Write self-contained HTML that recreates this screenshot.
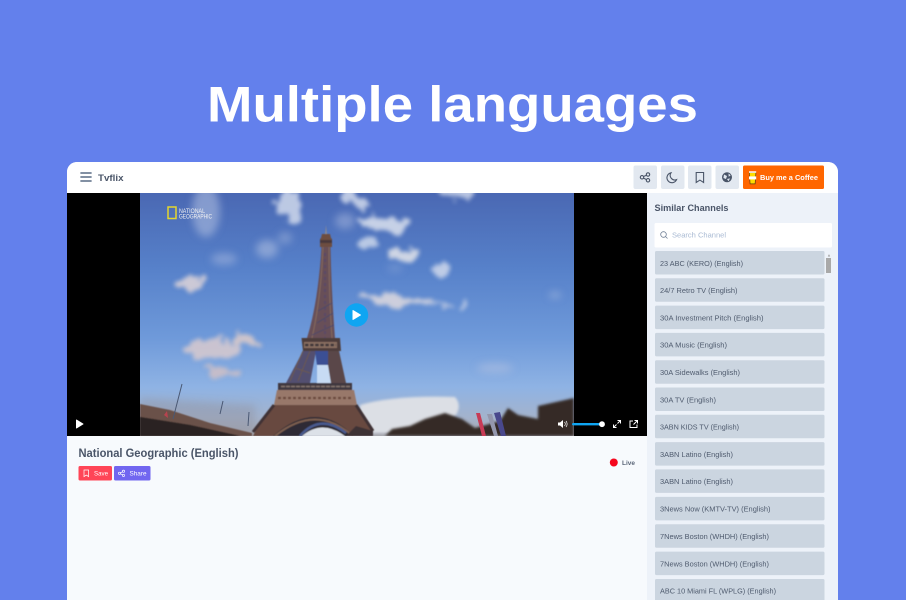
<!DOCTYPE html>
<html><head><meta charset="utf-8"><title>Tvflix</title>
<style>
html,body{margin:0;padding:0;width:906px;height:600px;overflow:hidden;background:#6380ec}
svg{display:block;filter:blur(.3px)}
text{font-family:"Liberation Sans",sans-serif}
</style></head>
<body>
<svg width="906" height="600" viewBox="0 0 906 600" xmlns="http://www.w3.org/2000/svg">
<defs>
<linearGradient id="sky" x1="0" y1="0" x2="0" y2="1">
<stop offset="0" stop-color="#4a68b3"/><stop offset=".3" stop-color="#5680c9"/><stop offset=".6" stop-color="#6f9ada"/><stop offset=".8" stop-color="#8fb3e4"/><stop offset=".92" stop-color="#a3b3cd"/><stop offset="1" stop-color="#a9a9b0"/>
</linearGradient>
<filter id="b1" x="-40%" y="-40%" width="180%" height="180%"><feGaussianBlur stdDeviation="1.3"/></filter>
<filter id="cl" x="-5%" y="-5%" width="110%" height="110%">
<feTurbulence type="fractalNoise" baseFrequency=".055" numOctaves="3" seed="7" result="n"/>
<feDisplacementMap in="SourceGraphic" in2="n" scale="22" xChannelSelector="R" yChannelSelector="G"/>
<feGaussianBlur stdDeviation="2.1"/>
</filter>
<filter id="b2" x="-40%" y="-40%" width="180%" height="180%"><feGaussianBlur stdDeviation="4"/></filter>
<filter id="b0" x="-10%" y="-10%" width="120%" height="120%"><feGaussianBlur stdDeviation=".4"/></filter>
<clipPath id="card"><path d="M67 600V172a10 10 0 0 1 10-10H828a10 10 0 0 1 10 10V600Z"/></clipPath>
<clipPath id="vid"><rect x="0" y="0" width="434" height="243"/></clipPath>
</defs>

<rect width="906" height="600" fill="#6380ec"/>
<text x="207" y="121.5" font-size="50" font-weight="700" fill="#fff" textLength="491" lengthAdjust="spacingAndGlyphs">Multiple languages</text>

<g clip-path="url(#card)">
<rect x="67" y="162" width="771" height="438" fill="#f7fafd"/>
<rect x="647" y="193" width="191" height="407" fill="#edf2f9"/>
<rect x="67" y="162" width="771" height="31" fill="#fff"/>

<!-- header -->
<g stroke="#718096" stroke-width="1.7" stroke-linecap="round"><path d="M81 173H91M81 177H91M81 181H91"/></g>
<text x="98" y="181" font-size="9.5" font-weight="700" fill="#4a5568" textLength="25.5" lengthAdjust="spacingAndGlyphs">Tvflix</text>

<g fill="#e2e8f0">
<rect x="633.5" y="165.5" width="23.5" height="23.5" rx="2"/>
<rect x="661" y="165.5" width="23.5" height="23.5" rx="2"/>
<rect x="688" y="165.5" width="23.5" height="23.5" rx="2"/>
<rect x="715.5" y="165.5" width="23.5" height="23.5" rx="2"/>
</g>
<rect x="743" y="165.5" width="81" height="23.5" rx="1.5" fill="#ff6600"/>
<g fill="none" stroke="#4a5568" stroke-width="1.1">
<circle cx="642" cy="177.3" r="1.7"/><circle cx="648" cy="174.5" r="1.7"/><circle cx="648" cy="180.3" r="1.7"/><path d="M643.5 176.5L646.5 175.2M643.5 178.1L646.5 179.6"/>
<path d="M671 172.8a5 5 0 1 0 5.6 6.8a4.6 4.6 0 0 1-5.6-6.8Z"/>
<path d="M696.2 172.5h7.4v10l-3.7-2.4l-3.7 2.4Z"/>
</g>
<circle cx="727" cy="177.3" r="5" fill="#4a5568"/>
<path d="M724 174.5l3 1.5l-1 3l-2.6-1ZM728.5 173.5l2.2 1.8l-2 1.5ZM727 179l3-.6l-1.5 2.9Z" fill="#e2e8f0"/>
<!-- coffee -->
<path d="M749.3 172.5h6.6l-.8 11.4h-5Z" fill="#ffdd00" stroke="#5b3a12" stroke-width=".7"/>
<rect x="749" y="176.4" width="7.2" height="3" fill="#fff"/>
<rect x="749" y="171.3" width="7.2" height="1.5" fill="#fff"/>
<text x="760" y="180" font-size="7.4" font-weight="700" fill="#fff" textLength="58" lengthAdjust="spacingAndGlyphs">Buy me a Coffee</text>

<!-- player -->
<rect x="67" y="193" width="580" height="243" fill="#000"/>
<g transform="translate(140 193)" clip-path="url(#vid)">
<rect width="434" height="243" fill="url(#sky)"/>
<!-- faint clouds -->
<g filter="url(#b2)" fill="#b4c2e2">
<ellipse cx="66" cy="18" rx="14" ry="26" opacity=".55"/>
<ellipse cx="84" cy="66" rx="13" ry="6" opacity=".45"/>
<ellipse cx="127" cy="56" rx="11" ry="9" opacity=".55"/>
<ellipse cx="145" cy="45" rx="7" ry="6" opacity=".4"/>
<ellipse cx="205" cy="28" rx="10" ry="8" opacity=".45"/>
<ellipse cx="355" cy="175" rx="18" ry="5" opacity=".5"/>
<ellipse cx="415" cy="102" rx="6" ry="3" opacity=".55"/>
<ellipse cx="255" cy="75" rx="8" ry="4" opacity=".25"/>
</g>
<!-- soft cloud bodies -->
<g filter="url(#cl)" opacity=".88">
<ellipse cx="151" cy="13" rx="11" ry="20" fill="#ccd6ea" transform="rotate(-12 151 13)"/>
<ellipse cx="216" cy="8" rx="13" ry="6" fill="#cdd7ea" transform="rotate(25 216 8)"/>
<ellipse cx="244" cy="30" rx="24" ry="9" fill="#d7deec" transform="rotate(8 244 30)"/>
<ellipse cx="228" cy="50" rx="9" ry="6" fill="#c8d4e9"/>
<ellipse cx="264" cy="61" rx="14" ry="8" fill="#e0e2e8"/>
<ellipse cx="302" cy="75" rx="8" ry="7" fill="#ccd6ea"/>
<ellipse cx="319" cy="-1" rx="19" ry="7" fill="#c9d3e8"/>
<ellipse cx="49" cy="91" rx="15" ry="5" fill="#dcd3d8"/>
<ellipse cx="259" cy="107" rx="36" ry="5" fill="#dcd8de"/>
<ellipse cx="291" cy="112" rx="17" ry="2" fill="#c5cee3"/>
<ellipse cx="322" cy="110" rx="5" ry="2.5" fill="#c8d2e8"/>
<ellipse cx="74" cy="156" rx="33" ry="10" fill="#d6c9cf"/>
<ellipse cx="109" cy="146" rx="15" ry="5" fill="#dccbc9"/>
<ellipse cx="79" cy="180" rx="21" ry="4" fill="#cdbfc6"/>
</g>
<!-- low cloud bank -->
<g filter="url(#b1)">
<path d="M220 212Q255 202 315 204Q322 212 316 222L290 240H232L220 222Z" fill="#dcdfe5"/>
</g>
<path d="M0 205L115 212V243H0Z" fill="#8e8f9b" opacity=".4" filter="url(#b2)"/>
<!-- tower -->
<g filter="url(#b0)">
<path d="M186 32l.9 9h-1.8Z" fill="#8e8b91"/>
<path d="M182 41h8l1 4l1 1v8h-12v-8l1-1Z" fill="#6d4d40"/>
<path d="M180 47h12v3h-12Z" fill="#48373a"/>
<path d="M181.5 54H190.5Q191.5 100 195 145H167Q178 110 181.5 54Z" fill="#685058"/>
<path d="M183 54Q181 105 172 145M189 54Q189 105 192 145" stroke="#866a5d" stroke-width="1" fill="none"/>
<path d="M185 60V145" stroke="#5a4a66" stroke-width="2" stroke-dasharray="3 3"/>
<path d="M177 130L193 120M172 142L194 132M178 118L192 110" stroke="#4b4a6b" stroke-width=".9" fill="none"/>
<path d="M161.5 145H200L201 158H163Z" fill="#4e3d3b"/>
<path d="M164 149h33v6h-33Z" fill="#8a7062"/>
<path d="M165 152h31" stroke="#3e3438" stroke-width="2.4" stroke-dasharray="3.5 1.6"/>
<path d="M163 158H176L170 190H146Z" fill="#53506f"/>
<path d="M163 158L150 188M170 158L158 188M155 175L170 180" stroke="#6c5850" stroke-width="1" fill="none"/>
<path d="M186 158H199L206 190H190Z" fill="#5a4748"/>
<path d="M175 158H188V172H177Z" fill="#3b5094"/>
<path d="M177 172H188L191 190H177Z" fill="#c7dbf4"/>
<path d="M138 190H212V197H138Z" fill="#40373f"/>
<path d="M141 193.5H210" stroke="#877871" stroke-width="1.6" stroke-dasharray="4 1"/>
<path d="M137 197H214L217 212H134Z" fill="#98786a"/>
<path d="M134 212H217L233 237L231 243H113L116 237Z" fill="#67493f"/>
<path d="M138 205H212" stroke="#6b493e" stroke-width="2.2" stroke-dasharray="3 2"/>
<path d="M134 212L113 239M216 212L233 238" stroke="#3f3234" stroke-width="3"/>
<path d="M133 243Q176 205 214 243Z" fill="#2f2b35"/>
<path d="M162 243Q182 226 205 243Z" fill="#dce1e8"/>
<path d="M135 243Q176 210 213 243" fill="none" stroke="#7d5f50" stroke-width="2"/>
<path d="M160 243Q180 220 206 240" fill="none" stroke="#485a8e" stroke-width="2.6"/>
<path d="M206 243L216 233L233 238V243Z" fill="#3e3234"/>
</g>
<!-- foreground -->
<path d="M0 211L30 217L70 230L112 240V243H0Z" fill="#6b5149" filter="url(#b0)"/>
<path d="M0 224L50 232L100 243H0Z" fill="#2a2220" filter="url(#b0)"/>
<path d="M33 226L42 191M80 221L83 208M108 233L109 219" stroke="#4a5873" stroke-width="1"/>
<path d="M24 222l3-4l1 7Z" fill="#b8434f"/>
<path d="M245 243L252 236L270 233L285 226L305 220L322 226L335 235L360 228L368 215L378 222L398 226L398 213L434 205V243Z" fill="#342a26" filter="url(#b1)"/>
<path d="M336 220L340 220L346 243H342Z" fill="#c73a55"/>
<path d="M347 221L352 221L358 243H354Z" fill="#9497ad"/>
<path d="M354 220L360 219L366 243H361Z" fill="#49488c"/>
<!-- logo -->
<rect x="28" y="14" width="8" height="11.5" fill="none" stroke="#e4d62e" stroke-width="1.5"/>
<text x="39" y="20" font-size="6" fill="#f2f2f2" textLength="26" lengthAdjust="spacingAndGlyphs">NATIONAL</text>
<text x="39" y="25.5" font-size="6" fill="#f2f2f2" textLength="33" lengthAdjust="spacingAndGlyphs">GEOGRAPHIC</text>
</g>

<circle cx="356.5" cy="315" r="11.7" fill="#0fa5f2"/>
<path d="M353 310.5V319.5L360.5 315Z" fill="#fff" stroke="#fff" stroke-linejoin="round"/>
<path d="M76.5 420V428L83 424Z" fill="#fff" stroke="#fff" stroke-linejoin="round"/>
<path d="M558 422.5h2l3-2.5v8l-3-2.5h-2Z" fill="#fff"/>
<path d="M564.5 422a3 3 0 0 1 0 4M566 421a4.5 4.5 0 0 1 0 6" stroke="#fff" stroke-width=".7" fill="none"/>
<rect x="572" y="423" width="30" height="2.4" rx="1.2" fill="#0fa5f2"/>
<circle cx="602" cy="424.2" r="2.9" fill="#fff"/>
<g fill="none" stroke="#fff" stroke-width="1">
<path d="M613.5 424.5v3h3M613.5 427.5l3-3M620.5 423.5v-3h-3M620.5 420.5l-3 3"/>
<path d="M633 421h-3v6.5h7v-3M633.5 424.5l4-4M634.5 420.5h3v3"/>
</g>

<!-- info -->
<text x="78.5" y="457" font-size="11.5" font-weight="700" fill="#4a5568" textLength="160" lengthAdjust="spacingAndGlyphs">National Geographic (English)</text>
<rect x="78.5" y="466" width="33.5" height="14.5" rx="1.5" fill="#ff4557"/>
<rect x="114" y="466" width="36.5" height="14.5" rx="1.5" fill="#7166f0"/>
<path d="M84 470h4.6v6.6l-2.3-1.5l-2.3 1.5Z" fill="none" stroke="#fff" stroke-width=".7"/>
<text x="94" y="475.5" font-size="6" fill="#fff" textLength="14" lengthAdjust="spacingAndGlyphs">Save</text>
<g fill="none" stroke="#fff" stroke-width=".7"><circle cx="119.5" cy="473.3" r="1.1"/><circle cx="123.5" cy="471.2" r="1.1"/><circle cx="123.5" cy="475.4" r="1.1"/><path d="M120.5 472.8l2-1M120.5 473.8l2 1"/></g>
<text x="129.5" y="475.5" font-size="6" fill="#fff" textLength="17" lengthAdjust="spacingAndGlyphs">Share</text>
<circle cx="613.8" cy="462.5" r="4" fill="#f5061d"/>
<text x="622" y="465" font-size="6.6" font-weight="700" fill="#5b6678" textLength="13" lengthAdjust="spacingAndGlyphs">Live</text>

<!-- sidebar -->
<text x="654.5" y="211" font-size="9" font-weight="700" fill="#4a5568" textLength="74" lengthAdjust="spacingAndGlyphs">Similar Channels</text>
<rect x="654.5" y="223" width="177.5" height="24.5" rx="1.5" fill="#fff"/>
<circle cx="663.5" cy="234.5" r="2.8" fill="none" stroke="#718096" stroke-width=".8"/>
<path d="M665.6 236.6L667.5 238.5" stroke="#718096" stroke-width=".8"/>
<text x="672" y="237.5" font-size="7" fill="#a9bad3" textLength="54" lengthAdjust="spacingAndGlyphs">Search Channel</text>
<text x="829" y="256.5" font-size="4" text-anchor="middle" fill="#a0a0a0">▲</text>
<rect x="826" y="258" width="5" height="15" fill="#a9a9a9"/>

<g fill="#cbd5e0">
<rect x="655" y="251" width="169.5" height="23.5" rx="1.5"/>
<rect x="655" y="278.3" width="169.5" height="23.5" rx="1.5"/>
<rect x="655" y="305.6" width="169.5" height="23.5" rx="1.5"/>
<rect x="655" y="332.9" width="169.5" height="23.5" rx="1.5"/>
<rect x="655" y="360.2" width="169.5" height="23.5" rx="1.5"/>
<rect x="655" y="387.5" width="169.5" height="23.5" rx="1.5"/>
<rect x="655" y="414.8" width="169.5" height="23.5" rx="1.5"/>
<rect x="655" y="442.1" width="169.5" height="23.5" rx="1.5"/>
<rect x="655" y="469.4" width="169.5" height="23.5" rx="1.5"/>
<rect x="655" y="496.9" width="169.5" height="23.5" rx="1.5"/>
<rect x="655" y="524.3" width="169.5" height="23.5" rx="1.5"/>
<rect x="655" y="551.6" width="169.5" height="23.5" rx="1.5"/>
<rect x="655" y="579" width="169.5" height="23.5" rx="1.5"/>
</g>
<g font-size="7.4" fill="#4f5b6e">
<text x="660" y="265.8" textLength="83" lengthAdjust="spacingAndGlyphs">23 ABC (KERO) (English)</text>
<text x="660" y="293" textLength="77.5" lengthAdjust="spacingAndGlyphs">24/7 Retro TV (English)</text>
<text x="660" y="320.4" textLength="103.5" lengthAdjust="spacingAndGlyphs">30A Investment Pitch (English)</text>
<text x="660" y="347.7" textLength="67" lengthAdjust="spacingAndGlyphs">30A Music (English)</text>
<text x="660" y="375" textLength="80" lengthAdjust="spacingAndGlyphs">30A Sidewalks (English)</text>
<text x="660" y="402.3" textLength="56" lengthAdjust="spacingAndGlyphs">30A TV (English)</text>
<text x="660" y="429.6" textLength="79" lengthAdjust="spacingAndGlyphs">3ABN KIDS TV (English)</text>
<text x="660" y="456.9" textLength="73" lengthAdjust="spacingAndGlyphs">3ABN Latino (English)</text>
<text x="660" y="484.2" textLength="73" lengthAdjust="spacingAndGlyphs">3ABN Latino (English)</text>
<text x="660" y="511.7" textLength="110.5" lengthAdjust="spacingAndGlyphs">3News Now (KMTV-TV) (English)</text>
<text x="660" y="539" textLength="109" lengthAdjust="spacingAndGlyphs">7News Boston (WHDH) (English)</text>
<text x="660" y="566.3" textLength="109" lengthAdjust="spacingAndGlyphs">7News Boston (WHDH) (English)</text>
<text x="660" y="593.6" textLength="116" lengthAdjust="spacingAndGlyphs">ABC 10 Miami FL (WPLG) (English)</text>
</g>
</g>
</svg>
</body></html>
